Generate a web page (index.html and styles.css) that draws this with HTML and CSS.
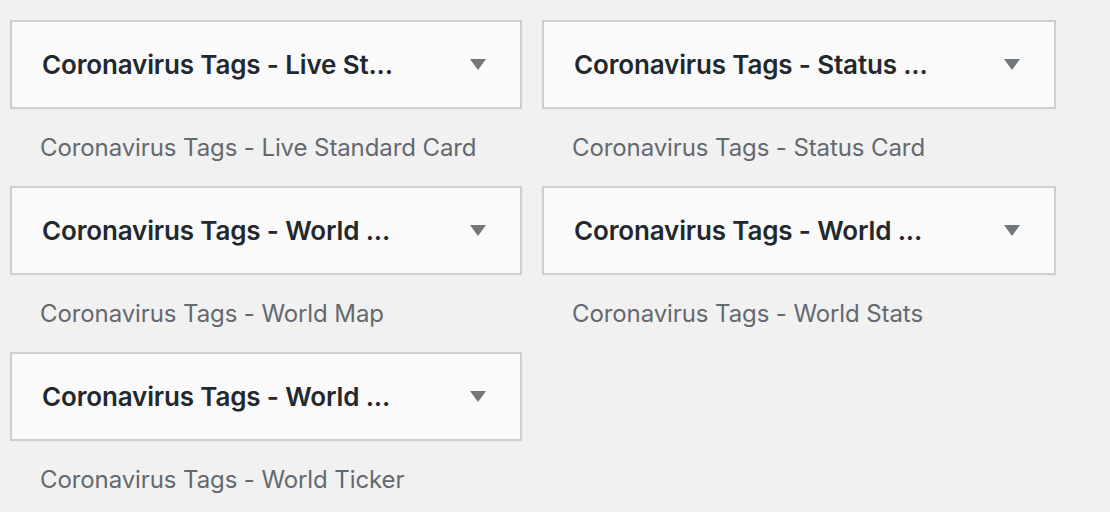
FILE: index.html
```html
<!DOCTYPE html>
<html>
<head>
<meta charset="utf-8">
<link rel="stylesheet" href="styles.css">
</head>
<body>
<div class="grid">
  <div class="widget">
    <div class="card"><h3 class="title">Coronavirus Tags - Live St...</h3><span class="arrow"></span></div>
    <p class="desc">Coronavirus Tags - Live Standard Card</p>
  </div>
  <div class="widget">
    <div class="card"><h3 class="title">Coronavirus Tags - Status ...</h3><span class="arrow"></span></div>
    <p class="desc">Coronavirus Tags - Status Card</p>
  </div>
  <div class="widget">
    <div class="card"><h3 class="title">Coronavirus Tags - World ...</h3><span class="arrow"></span></div>
    <p class="desc">Coronavirus Tags - World Map</p>
  </div>
  <div class="widget">
    <div class="card"><h3 class="title">Coronavirus Tags - World ...</h3><span class="arrow"></span></div>
    <p class="desc">Coronavirus Tags - World Stats</p>
  </div>
  <div class="widget">
    <div class="card"><h3 class="title">Coronavirus Tags - World ...</h3><span class="arrow"></span></div>
    <p class="desc">Coronavirus Tags - World Ticker</p>
  </div>
</div>
</body>
</html>
```
FILE: styles.css
```css
html, body {
  margin: 0;
  background: #f1f1f1;
  font-family: Inter, "Noto Sans", sans-serif;
}
.grid {
  display: grid;
  grid-template-columns: 512px 514px;
  column-gap: 20px;
  padding: 20px 0 0 10px;
}
.widget {
  height: 166px;
}
.card {
  box-sizing: border-box;
  height: 89px;
  background: #fafafa;
  border: 2px solid #ccd0d4;
  box-shadow: 0 1px 2px rgba(0,0,0,0.04);
  display: flex;
  align-items: center;
  justify-content: space-between;
  padding: 0 34px 0 30px;
}
.title {
  margin: 0;
  font-size: 26px;
  font-weight: 600;
  letter-spacing: -0.15px;
  color: #23282d;
  white-space: nowrap;
}
.arrow {
  width: 0;
  height: 0;
  border-left: 8px solid transparent;
  border-right: 8px solid transparent;
  border-top: 11px solid #72777c;
}
.desc {
  margin: 24px 0 0 30px;
  font-size: 24px;
  letter-spacing: -0.1px;
  color: #646970;
}
```
